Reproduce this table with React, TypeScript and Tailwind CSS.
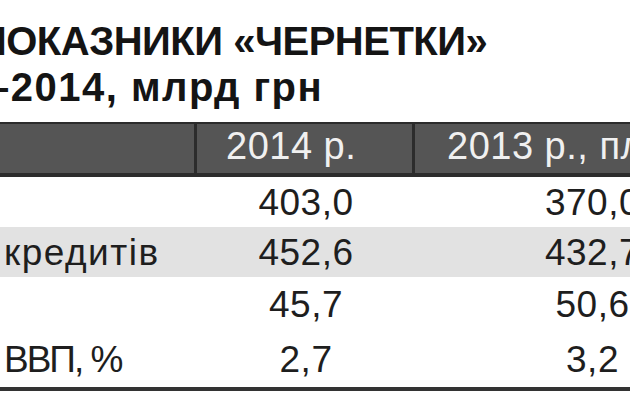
export default function App() {
  const rows = [
    { label: "", lc: "", a: "403,0", b: "370,0", bg: "bg-white", h: "h-[50px]" },
    { label: "кредитів", lc: "tracking-[1.5px]", a: "452,6", b: "432,7", bg: "bg-[#e2e2e2]", h: "h-[50px]" },
    { label: "", lc: "", a: "45,7", b: "50,6", bg: "bg-white", h: "h-[55px]" },
    { label: "ВВП, %", lc: "tracking-[-2px]", a: "2,7", b: "3,2", bg: "bg-white", h: "h-[55px]" },
  ];
  return (
    <div className="w-[630px] h-[416px] overflow-hidden bg-white font-['Liberation_Sans',Arial,sans-serif] text-[#1e1e1e]">
      <div className="pt-[18px] text-[40px] font-bold leading-[46px] text-[#141414] whitespace-nowrap">
        <div className="ml-[-22px] tracking-[-0.5px]">ПОКАЗНИКИ «ЧЕРНЕТКИ»</div>
        <div className="ml-[-13px] tracking-[1.5px]">–2014, млрд грн</div>
      </div>
      <div className="mt-[12px] w-[800px]">
        <div className="flex h-[55px] border-t-2 border-b-4 border-[#2c2c2c] bg-[#555555] text-[38px] leading-none tracking-[0.5px] text-[#f0f0f0] whitespace-nowrap">
          <div className="w-[197px] border-r-[3px] border-[#2c2c2c]" />
          <div className="w-[218px] border-r-[3px] border-[#2c2c2c] pl-[29px] pt-[3px]">2014 р.</div>
          <div className="flex-1 pl-[32px] pt-[3px]">2013 р., план</div>
        </div>
        {rows.map((r, i) => (
          <div key={i} className={`flex items-center ${r.h} ${r.bg} text-[37px] leading-none tracking-[0.5px] whitespace-nowrap`}>
            <div className={`w-[197px] pl-[4px] ${r.lc}`}>{r.label}</div>
            <div className="w-[218px] text-center">{r.a}</div>
            <div className="w-[355px] text-center">{r.b}</div>
          </div>
        ))}
        <div className="h-[4px] bg-[#333333]" />
      </div>
    </div>
  );
}
